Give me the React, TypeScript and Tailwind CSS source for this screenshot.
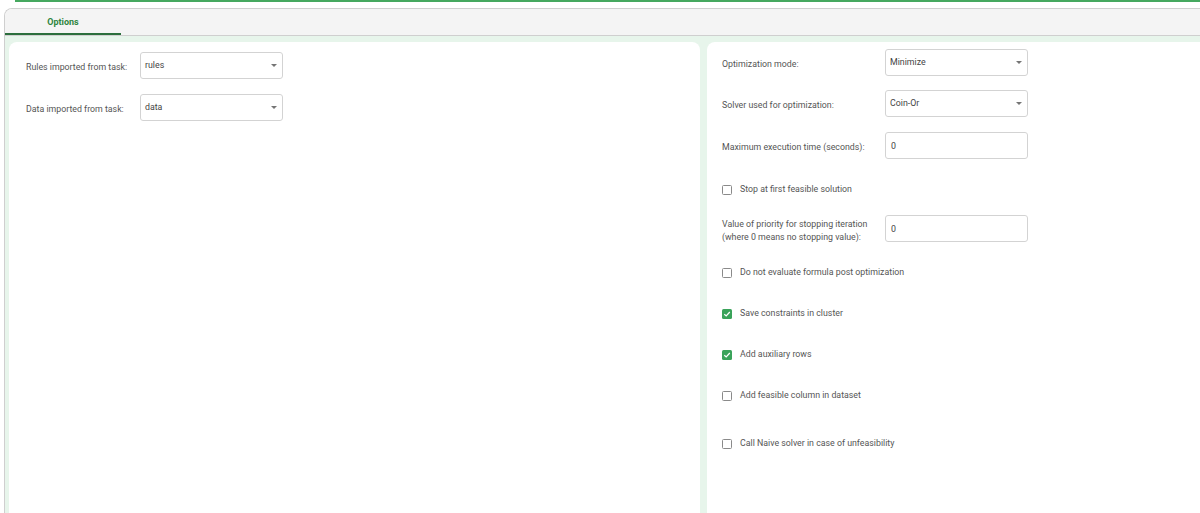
import React from "react";

const font = { fontFamily: "Roboto, 'Liberation Sans', sans-serif" };

function Caret() {
  return (
    <svg width="6" height="3" viewBox="0 0 6 3" className="shrink-0">
      <path d="M0 0 L6 0 L3 3 Z" fill="#757575" />
    </svg>
  );
}

function Select({ value }: { value: string }) {
  return (
    <div className="w-[143px] h-[27px] border border-[#d3d3d3] rounded-[3px] bg-white flex items-center pl-[4px] pr-[5px]">
      <span className="flex-1 text-[8.8px] text-[#444] pt-[1px]">{value}</span>
      <Caret />
    </div>
  );
}

function Input({ value }: { value: string }) {
  return (
    <div className="w-[143px] h-[27px] border border-[#d3d3d3] rounded-[3px] bg-white flex items-center pl-[5px] pt-[3px]">
      <span className="text-[8.8px] text-[#444]">{value}</span>
    </div>
  );
}

function Check({ checked, label }: { checked?: boolean; label: string }) {
  return (
    <div className="flex items-center pt-[3px]">
      {checked ? (
        <div className="w-[10px] h-[10px] rounded-[1.5px] bg-[#3aa35a] flex items-center justify-center shrink-0">
          <svg width="8" height="8" viewBox="0 0 8 8">
            <path d="M1.3 4.2 L3.2 6 L6.8 2" stroke="white" strokeWidth="1.2" fill="none" />
          </svg>
        </div>
      ) : (
        <div className="w-[10px] h-[10px] rounded-[1.5px] border border-[#8a8a8a] bg-white shrink-0" />
      )}
      <span className="ml-[8px] text-[8.8px] text-[#555] pt-[1px]">{label}</span>
    </div>
  );
}

const label = "text-[8.8px] text-[#555] pt-[5px]";

export default function App() {
  return (
    <div className="w-[1200px] h-[513px] overflow-hidden bg-white" style={font}>
      <div className="ml-[15px] h-[2px] bg-[#46a85f]" />
      <div className="ml-[4px] mt-[6px] border-l border-t border-[#cfcfcf] rounded-tl-[8px] overflow-hidden">
        <div className="h-[27px] bg-[#f4f4f4] border-b border-[#cfcfcf] flex">
          <div className="w-[116px] h-full flex flex-col items-center">
            <div className="flex-1 flex items-center pt-[4px]">
              <span className="text-[9px] font-bold text-[#2e8540]">Options</span>
            </div>
            <div className="w-full h-[2px] bg-[#2b6e3c]" />
          </div>
        </div>
        <div className="h-[480px] bg-[#e7f5eb] flex gap-[7px] pl-[4px] pt-[6px]">
          <div className="w-[691px] shrink-0 bg-white rounded-t-[8px] pt-[10px] pl-[17px] flex flex-col gap-[15px]">
            <div className="flex items-center h-[27px]">
              <span className={`w-[114px] ${label}`}>Rules imported from task:</span>
              <Select value="rules" />
            </div>
            <div className="flex items-center h-[27px]">
              <span className={`w-[114px] ${label}`}>Data imported from task:</span>
              <Select value="data" />
            </div>
          </div>
          <div className="w-[510px] shrink-0 bg-white rounded-tl-[8px] pl-[15px] flex flex-col">
            <div className="h-[40px] flex items-center">
              <span className={`w-[163px] ${label}`}>Optimization mode:</span>
              <Select value="Minimize" />
            </div>
            <div className="h-[43px] flex items-center">
              <span className={`w-[163px] ${label}`}>Solver used for optimization:</span>
              <Select value="Coin-Or" />
            </div>
            <div className="h-[41px] flex items-center">
              <span className={`w-[163px] ${label}`}>Maximum execution time (seconds):</span>
              <Input value="0" />
            </div>
            <div className="h-[44px] flex items-center">
              <Check label="Stop at first feasible solution" />
            </div>
            <div className="h-[37px] flex items-center">
              <span className="w-[163px] text-[8.8px] leading-[13px] text-[#555] pt-[4px]">
                Value of priority for stopping iteration
                <br />
                (where 0 means no stopping value):
              </span>
              <Input value="0" />
            </div>
            <div className="h-[48px] flex items-center">
              <Check label="Do not evaluate formula post optimization" />
            </div>
            <div className="h-[34px] flex items-center">
              <Check checked label="Save constraints in cluster" />
            </div>
            <div className="h-[48px] flex items-center">
              <Check checked label="Add auxiliary rows" />
            </div>
            <div className="h-[34px] flex items-center">
              <Check label="Add feasible column in dataset" />
            </div>
            <div className="h-[62px] flex items-center">
              <Check label="Call Naive solver in case of unfeasibility" />
            </div>
          </div>
        </div>
      </div>
    </div>
  );
}
